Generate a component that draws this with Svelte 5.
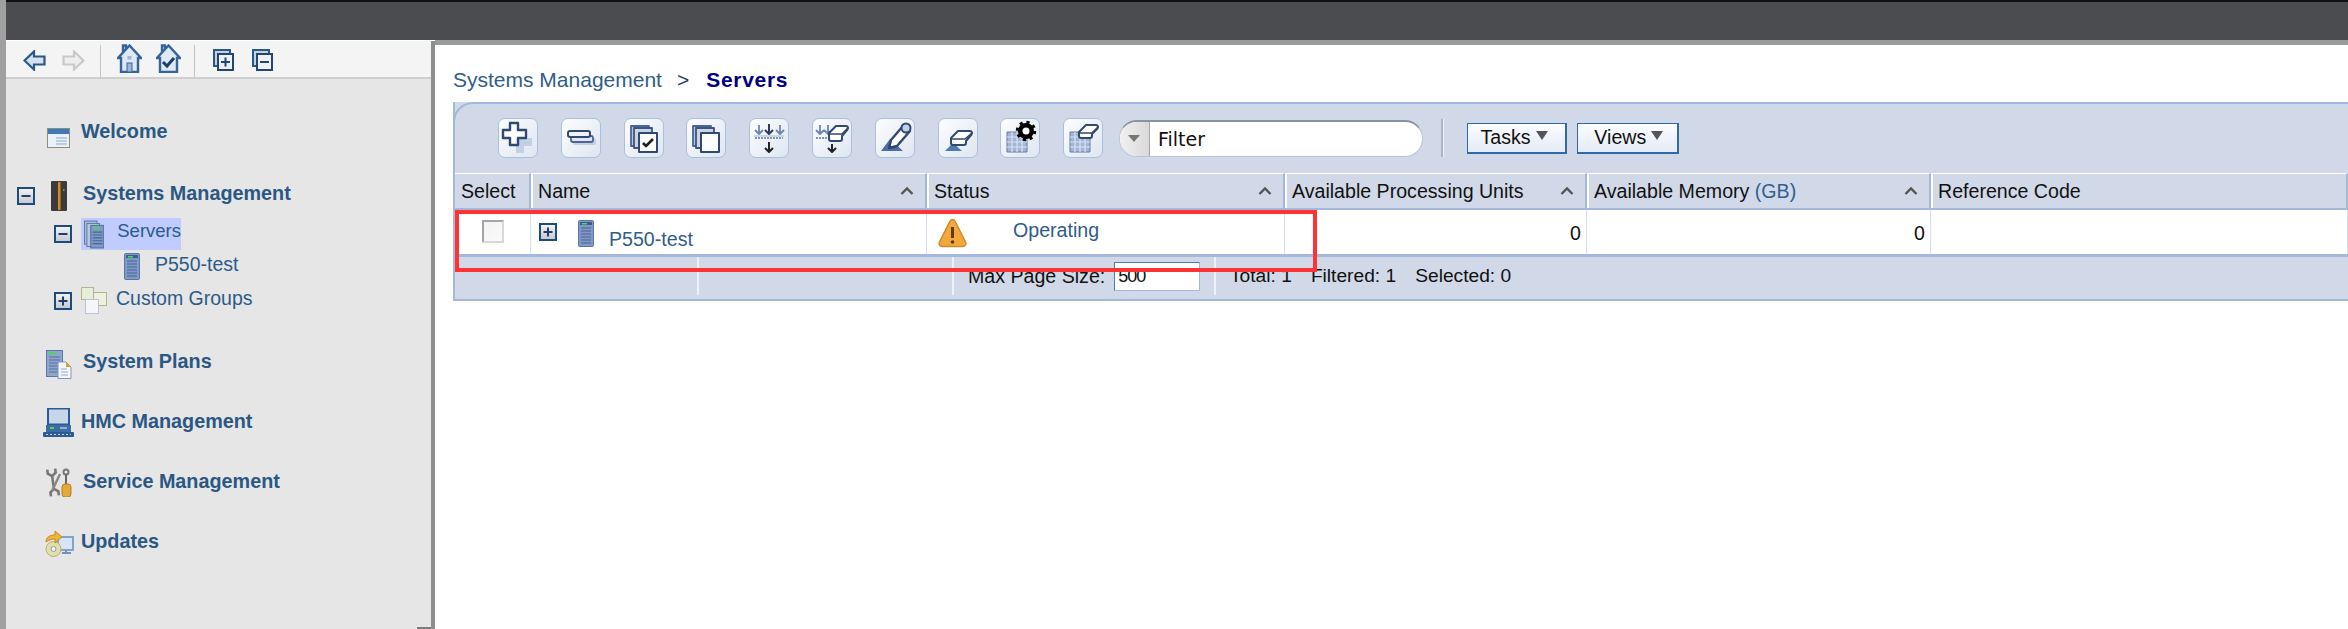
<script>
  const columns = [
    { label: "Select", width: 76 },
    { label: "Name", width: 396, sort: true },
    { label: "Status", width: 358, sort: true },
    { label: "Available Processing Units", width: 302, sort: true },
    { label: "Available Memory", unit: "(GB)", width: 344, sort: true },
    { label: "Reference Code", width: 417 }
  ];
</script>

{#snippet expander(open, size = 18)}
  <svg class="expander" width={size} height={size} viewBox="0 0 18 18">
    <defs>
      <linearGradient id="exp" x1="0" y1="0" x2="0" y2="1">
        <stop offset="0" stop-color="#f4f4f4" />
        <stop offset="1" stop-color="#c4c8d0" />
      </linearGradient>
    </defs>
    <rect x="1" y="1" width="16" height="16" fill="url(#exp)" stroke="#1f4a7c" stroke-width="2" />
    <path d="M4.5 9h9" stroke="#1f3f68" stroke-width="2" />
    {#if !open}<path d="M9 4.5v9" stroke="#1f3f68" stroke-width="2" />{/if}
  </svg>
{/snippet}

{#snippet serverIcon(w = 16, h = 27)}
  <svg class="server" width={w} height={h} viewBox="0 0 16 27">
    <rect x="0.5" y="0.5" width="15" height="26" rx="1" fill="#7f98c4" stroke="#5a76a6" />
    <rect x="2" y="2" width="12" height="3" fill="#3e5c8e" />
    <rect x="4" y="3" width="5" height="1.5" fill="#44dd55" />
    <path d="M3 8h10M3 11h10M3 14h10M3 17h10M3 20h10M3 23h10" stroke="#4a6696" stroke-width="1.2" />
  </svg>
{/snippet}

{#snippet plate(kind)}
  <svg width="40" height="40" viewBox="0 0 40 40" fill="none" stroke-linejoin="round">
    {#if kind === "add"}
      <path d="M15 9h8v7h8v8h-8v7h-8v-7H8v-8h7z" fill="#c3cfe3" transform="translate(3 4)" />
      <path d="M12 5h8v7h8v8h-8v7h-8v-7H5v-8h7z" fill="#fff" stroke="#31486f" stroke-width="2.4" />
    {:else if kind === "bars"}
      <rect x="12" y="20" width="23" height="7" rx="2" fill="#c3cfe3" />
      <rect x="10" y="18" width="22" height="6" rx="2" fill="#dfe6f2" stroke="#4d6590" stroke-width="1.8" />
      <rect x="7" y="13" width="22" height="6" rx="2" fill="#eef2f8" stroke="#31486f" stroke-width="2" />
    {:else if kind === "copycheck" || kind === "copy"}
      <rect x="7" y="8" width="18" height="20" fill="#b8c6dd" stroke="#4d6590" stroke-width="1.8" />
      <rect x="10" y="10" width="18" height="20" fill="#c9d4e6" stroke="#3d5580" stroke-width="1.8" />
      <rect x="15" y="15" width="18" height="19" fill="#fff" stroke="#31486f" stroke-width="2" />
      {#if kind === "copycheck"}
        <path d="M19 25l3 3 7-7" stroke="#222" stroke-width="2.6" />
      {/if}
    {:else if kind === "arrows"}
      <path d="M10 7v8M6 12l4 4 4-4M31 7v8M27 12l4 4 4-4" stroke="#6d86b0" stroke-width="1.8" />
      <path d="M20 6v10M16 12l4 4 4-4" stroke="#2c3e5c" stroke-width="2" />
      <path d="M6 20h28" stroke="#8094b8" stroke-width="2" stroke-dasharray="2 1" />
      <path d="M5 18h30" stroke="#a9b9d4" stroke-width="1" />
      <path d="M20 24v10M16 30l4 4 4-4" stroke="#222" stroke-width="2" />
    {:else if kind === "eraserarrows"}
      <path d="M8 7v8M4 12l4 4 4-4M16 7v8M12 12l4 4 4-4" stroke="#6d86b0" stroke-width="1.8" />
      <path d="M4 20h14" stroke="#8094b8" stroke-width="2" stroke-dasharray="2 1" />
      <path d="M17 15l7-7h10c2 0 2.500 2 1.500 3.500L30 18v3c0 1-1 2-2 2H19c-1 0-2-1-2-2z" fill="#fff" stroke="#31486f" stroke-width="2" />
      <path d="M17 16h13l6-6" stroke="#31486f" stroke-width="1.600" />
      <path d="M20 26v8M16 30l4 4 4-4" stroke="#222" stroke-width="2" />
    {:else if kind === "pencil"}
      <path d="M6 33l9-12 13 12z" fill="#4d6ea8" />
      <path d="M14 30l2-8 12-14 7 5-13 15z" fill="#fff" stroke="#31486f" stroke-width="2.400" />
      <circle cx="31" cy="10" r="4.500" fill="#c3cfe3" stroke="#31486f" stroke-width="2" />
      <path d="M14 30l3-1-2-2z" fill="#31486f" stroke="#31486f" />
    {:else if kind === "erasertri"}
      <path d="M7 33l8-8 9 8z" fill="#4d7ab2" />
      <path d="M13 20l7-7h12c2 0 2.500 2 1.500 3.500L28 23v2c0 1-1 2-2 2H15c-1 0-2-1-2-2z" fill="#fff" stroke="#31486f" stroke-width="2" />
      <path d="M13 21h14l7-6" stroke="#31486f" stroke-width="1.600" />
    {:else if kind === "gridgear" || kind === "griderase"}
      <rect x="7" y="14" width="20" height="20" fill="#a4b6d6" stroke="#5d7aab" />
      <path d="M7 19h20M7 24h20M7 29h20M12 14v20M17 14v20M22 14v20" stroke="#d9e1ef" stroke-width="1.2" />
      {#if kind === "gridgear"}
        <circle cx="26" cy="13" r="8" fill="#000" />
        <circle cx="26" cy="13" r="8.500" fill="none" stroke="#000" stroke-width="3.500" stroke-dasharray="3 3.700" />
        <circle cx="26" cy="13" r="3.500" fill="#fff" />
      {:else}
        <path d="M16 14l7-7h10c2 0 2.500 2 1.500 3.500L29 16v2c0 1-1 2-2 2H18c-1 0-2-1-2-2z" fill="#fff" stroke="#31486f" stroke-width="2" />
        <path d="M16 15h13l6-6" stroke="#31486f" stroke-width="1.600" />
      {/if}
    {/if}
  </svg>
{/snippet}

{#snippet caret()}
  <svg class="caret" width="14" height="9" viewBox="0 0 14 9" fill="none">
    <path d="M1.500 8L7 2.500 12.500 8" stroke="#555" stroke-width="2.400" />
  </svg>
{/snippet}

<div class="app">
  <header class="topbar"></header>

  <div class="body">
    <aside class="side">
      <div class="nav-tools">
        <svg class="arrow" width="23" height="21" viewBox="0 0 23 21">
          <path d="M1.500 10.500L11 1.500v5h10.500v8H11v5z" fill="#d5e1f1" stroke="#2c5688" stroke-width="2.200" />
        </svg>
        <svg class="arrow fwd" width="23" height="21" viewBox="0 0 23 21">
          <path d="M21.500 10.500L12 1.500v5H1.500v8H12v5z" fill="#eee" stroke="#c9c9c9" stroke-width="2.200" />
        </svg>
        <span class="sep first"></span>
        <svg class="home" width="25" height="29" viewBox="0 0 25 29">
          <path d="M6 8V1.500h3v3.500M12.500 1.500L1 14h3v14h17V14h3z" fill="#dfe9f6" stroke="#35639a" stroke-width="2.400" />
          <rect x="10" y="19" width="5" height="9" fill="#9db6d9" stroke="#35639a" />
          <rect x="10.500" y="12" width="4" height="3.500" fill="#9db6d9" />
        </svg>
        <svg class="home two" width="25" height="29" viewBox="0 0 25 29" fill="none">
          <path d="M6 8V1.500h3v3.500M12.500 1.500L1 14h3v14h17V14h3z" fill="#dfe9f6" stroke="#35639a" stroke-width="2.400" />
          <path d="M7 18l4 4 7-8" stroke="#1f3f68" stroke-width="3" />
        </svg>
        <span class="sep second"></span>
        <svg class="stack" width="21" height="22" viewBox="0 0 21 22">
          <rect x="1" y="1" width="16" height="16" fill="#c5d2e4" stroke="#2c5688" stroke-width="2" />
          <rect x="5" y="5" width="15" height="16" fill="#edf1f6" stroke="#24456f" stroke-width="2" />
          <path d="M8 13h9M12.500 8.500v9" stroke="#24456f" stroke-width="2" />
        </svg>
        <svg class="stack two" width="21" height="22" viewBox="0 0 21 22">
          <rect x="1" y="1" width="16" height="16" fill="#c5d2e4" stroke="#2c5688" stroke-width="2" />
          <rect x="5" y="5" width="15" height="16" fill="#edf1f6" stroke="#24456f" stroke-width="2" />
          <path d="M8 13h9" stroke="#24456f" stroke-width="2" />
        </svg>
      </div>

      <nav class="tree">
        <div class="item welcome">
          <svg class="ico" width="23" height="20" viewBox="0 0 23 20">
            <rect x="0.500" y="0.500" width="22" height="19" fill="#eaf1fa" stroke="#8b8f78" />
            <rect x="1" y="1" width="21" height="5" fill="#3f78b8" />
            <path d="M9 10h11M9 13h11M9 16h11" stroke="#a8c2e2" stroke-width="1.400" />
          </svg>
          <span class="label">Welcome</span>
        </div>

        <div class="item sysmgmt">
          {@render expander(true)}
          <svg class="ico" width="16" height="30" viewBox="0 0 16 30">
            <rect width="16" height="30" rx="1" fill="#3b3b3b" />
            <rect x="7" y="1" width="2.500" height="28" fill="#d98a1e" />
            <rect x="12" y="8" width="1.500" height="2" fill="#44aa55" />
          </svg>
          <span class="label">Systems Management</span>
        </div>

        <div class="item servers">
          {@render expander(true)}
          <div class="selected">
            <svg width="21" height="29" viewBox="0 0 21 29">
              <rect x="0.500" y="0.500" width="13" height="24" fill="#a9bcdc" stroke="#5a76a6" />
              <rect x="3" y="3" width="13" height="24" fill="#b8c8e2" stroke="#5a76a6" />
              <rect x="7" y="5" width="13.500" height="23.500" fill="#7f98c4" stroke="#4f6c9e" />
              <rect x="9" y="6.500" width="7" height="2" fill="#44dd55" />
              <path d="M9 12h10M9 15h10M9 18h10M9 21h10M9 24h10" stroke="#4a6696" stroke-width="1.200" />
            </svg>
            <span>Servers</span>
          </div>
        </div>

        <div class="item p550">
          {@render serverIcon()}
          <span>P550-test</span>
        </div>

        <div class="item groups">
          {@render expander(false)}
          <svg class="ico" width="26" height="27" viewBox="0 0 26 27">
            <rect x="0.500" y="0.500" width="12" height="12" fill="#e8efd8" stroke="#b2b58c" />
            <rect x="12.500" y="5.500" width="13" height="13" fill="#eef0e2" stroke="#b2b58c" />
            <rect x="4.500" y="12.500" width="13" height="14" fill="#f4f6fa" stroke="#b9c4d6" />
          </svg>
          <span>Custom Groups</span>
        </div>

        <div class="item plans">
          <svg class="ico" width="26" height="29" viewBox="0 0 26 29">
            <rect x="0.500" y="0.500" width="16" height="26" fill="#8fa6cc" stroke="#5a76a6" />
            <rect x="3" y="2" width="6" height="2" fill="#44dd55" />
            <path d="M3 7h11M3 10h11M3 13h11M3 16h11M3 19h11M3 22h11" stroke="#52709f" />
            <path d="M12 12h8l5 5v11.500H12z" fill="#f3f6fb" stroke="#7f96bb" />
            <path d="M20 12l5 5h-5z" fill="#e0a02e" />
            <path d="M15 19h6M15 22h7M15 25h7" stroke="#8fa6cc" />
          </svg>
          <span class="label">System Plans</span>
        </div>

        <div class="item hmc">
          <svg class="ico" width="31" height="29" viewBox="0 0 31 29">
            <rect x="5" y="0.500" width="21" height="16" fill="#c7d6ea" stroke="#2e5a92" stroke-width="2" />
            <rect x="3" y="17" width="25" height="7" fill="#3f6ba5" />
            <rect x="7" y="19" width="4" height="2" fill="#44dd55" />
            <rect x="17" y="19" width="7" height="2" fill="#8fb0d8" />
            <rect x="0" y="24" width="31" height="5" rx="1" fill="#2e5a92" />
            <path d="M3 26.500h25" stroke="#c7d6ea" stroke-dasharray="2 2" />
          </svg>
          <span class="label">HMC Management</span>
        </div>

        <div class="item service">
          <svg class="ico" width="26" height="29" viewBox="0 0 26 29" fill="none">
            <path d="M3 1v4l4 3 4-3V1M7 8v13M3 28v-4l4-3 4 3v4" stroke="#777" stroke-width="2.600" transform="rotate(-8 7 14)" />
            <path d="M14 6l-8 17" stroke="#888" stroke-width="2.400" />
            <circle cx="20" cy="4" r="2.500" stroke="#777" stroke-width="2" />
            <path d="M20 6v11" stroke="#666" stroke-width="2" />
            <rect x="16" y="16" width="9" height="13" rx="3" fill="#e3a93a" stroke="#b57f1c" />
          </svg>
          <span class="label">Service Management</span>
        </div>

        <div class="item updates">
          <svg class="ico" width="29" height="27" viewBox="0 0 29 27">
            <rect x="13" y="7" width="15" height="13" fill="#d7e6f6" stroke="#6e93bd" stroke-width="1.600" />
            <path d="M17 23h9M21 20v3" stroke="#6e93bd" stroke-width="2" />
            <circle cx="8.500" cy="19" r="7.500" fill="#e3dfa8" stroke="#b5b07a" />
            <circle cx="8.500" cy="19" r="2.500" fill="#f4f4f4" stroke="#8f9aaf" />
            <path d="M1 12c0-5 4-7 9-7V1l7 6-7 6V9c-4 0-6 1-9 3z" fill="#ecb53e" stroke="#c68a18" />
          </svg>
          <span class="label">Updates</span>
        </div>
      </nav>
      <span class="grip"></span>
    </aside>

    <main class="main">
      <div class="crumbs">
        <span class="crumb">Systems Management</span>
        <span class="gt">&gt;</span>
        <span class="here">Servers</span>
      </div>

      <section class="panel">
        <div class="tools">
          {#each ["add", "bars", "copycheck", "copy", "arrows", "eraserarrows", "pencil", "erasertri", "gridgear", "griderase"] as kind}
            <button class="tool">{@render plate(kind)}</button>
          {/each}
          <div class="filter">
            <span class="drop"><i></i></span>
            <span class="filter-text">Filter</span>
          </div>
          <span class="tool-sep"></span>
          <button class="menu tasks">Tasks<i></i></button>
          <button class="menu views">Views<i></i></button>
        </div>

        <div class="thead">
          {#each columns as col}
            <div class="th" style="width: {col.width}px">
              <span>{col.label}{#if col.unit}&nbsp;<em>{col.unit}</em>{/if}</span>
              {#if col.sort}{@render caret()}{/if}
            </div>
          {/each}
        </div>

        <div class="tr">
          <div class="td check" style="width: {columns[0].width}px"><span class="box"></span></div>
          <div class="td name" style="width: {columns[1].width}px">
            {@render expander(false)}
            {@render serverIcon()}
            <span class="link">P550-test</span>
          </div>
          <div class="td status" style="width: {columns[2].width}px">
            <svg width="29" height="30" viewBox="0 0 29 30">
              <path d="M14.500 1.500c1.500 0 2.300 1 3 2.500l10 20c1 2.500-.3 4.500-3 4.500h-20c-2.700 0-4-2-3-4.500l10-20c.7-1.500 1.500-2.500 3-2.500z" fill="#f3a83e" stroke="#cf8a2a" stroke-width="1.500" />
              <path d="M14.500 9v11" stroke="#5a3b12" stroke-width="3" />
              <circle cx="14.500" cy="24" r="1.800" fill="#5a3b12" />
            </svg>
            <span class="link">Operating</span>
          </div>
          <div class="td num" style="width: {columns[3].width}px">0</div>
          <div class="td num" style="width: {columns[4].width}px">0</div>
          <div class="td" style="width: {columns[5].width}px"></div>
        </div>

        <div class="foot">
          <div class="fcell a"></div>
          <div class="fcell b"></div>
          <div class="fcell c">Max Page Size:<span class="size">500</span></div>
          <div class="fcell d">
            <span>Total: 1</span><span>Filtered: 1</span><span>Selected: 0</span>
          </div>
        </div>

        <div class="callout"></div>
      </section>
    </main>
  </div>
</div>

<style>
  :global(body) {
    margin: 0;
    background: #fff;
  }

  .app {
    width: 2348px;
    height: 629px;
    overflow: hidden;
    box-sizing: border-box;
    border-left: 6px solid #a0a0a0;
    display: flex;
    flex-direction: column;
    font-family: "Liberation Sans", Arial, sans-serif;
    font-size: 19.600px;
    color: #111;
  }

  .topbar {
    height: 40px;
    flex: none;
    box-sizing: border-box;
    border-top: 2px solid #111;
    background: #4b4c50;
  }

  .body {
    flex: 1;
    display: flex;
    min-height: 0;
  }

  /* left navigation */
  .side {
    width: 429px;
    flex: none;
    box-sizing: border-box;
    margin-top: 1px;
    background: #e6e6e6;
    border-right: 4px solid #8d8d8d;
    position: relative;
  }

  .nav-tools {
    height: 38px;
    box-sizing: border-box;
    background: #f4f4f4;
    border-bottom: 2px solid #cfcfcf;
    position: relative;
  }

  .nav-tools svg,
  .nav-tools .sep {
    position: absolute;
  }

  .arrow { left: 17px; top: 9px; }
  .arrow.fwd { left: 56px; }
  .sep { width: 1px; height: 32px; top: 4px; background: #c4c4c4; }
  .sep.first { left: 94px; }
  .sep.second { left: 188px; }
  .home { left: 111px; top: 3px; }
  .home.two { left: 150px; }
  .stack { left: 207px; top: 8px; }
  .stack.two { left: 246px; }

  .grip {
    position: absolute;
    right: 0;
    bottom: 0;
    width: 14px;
    height: 2px;
    background: #7c7c7c;
  }

  .tree {
    color: #2c5a8a;
    font-size: 19.500px;
  }

  .item {
    display: flex;
    align-items: center;
    position: absolute;
    white-space: nowrap;
  }

  .label {
    font-weight: 700;
    font-size: 19.800px;
    color: #2a5783;
  }

  .welcome { left: 41px; top: 87px; gap: 11px; }
  .welcome .label { margin-top: -14px; }
  .sysmgmt { left: 11px; top: 140px; }
  .sysmgmt .ico { margin-left: 16px; margin-right: 16px; }
  .sysmgmt .label { margin-top: -6px; }
  .servers { left: 48px; top: 177px; }
  .selected {
    display: flex;
    align-items: center;
    gap: 13px;
    width: 100px;
    height: 32px;
    margin-left: 9px;
    padding-left: 3px;
    box-sizing: border-box;
    background: #c0ccff;
    font-size: 18.500px;
  }
  .selected span { margin-top: -6px; }
  .p550 { left: 118px; top: 212px; gap: 15px; }
  .p550 span { margin-top: -4px; }
  .groups { left: 48px; top: 246px; gap: 9px; }
  .groups span { margin-top: -5px; }
  .plans { left: 40px; top: 309px; gap: 11px; }
  .plans .label { margin-top: -7px; }
  .hmc { left: 37px; top: 367px; gap: 7px; }
  .hmc .label { margin-top: -3px; }
  .service { left: 40px; top: 427px; gap: 11px; }
  .service .label { margin-top: -3px; }
  .updates { left: 39px; top: 489px; gap: 7px; }
  .updates .label { margin-top: -4px; }

  /* main area */
  .main {
    flex: 1;
    min-width: 0;
    padding-left: 18px;
    box-sizing: border-box;
    border-top: 5px solid #9a9a9a;
  }

  .crumbs {
    height: 26px;
    margin: 22px 0 9px;
    display: flex;
    align-items: center;
    font-size: 21px;
    color: #2f5d8a;
  }

  .gt {
    margin-left: 15px;
    color: #1c3f74;
  }

  .here {
    margin-left: 17px;
    font-weight: 700;
    letter-spacing: 0.700px;
    color: #000080;
  }

  .panel {
    position: relative;
    width: 1895px;
    height: 199px;
    box-sizing: border-box;
    background: #d1d9e8;
    border-left: 2px solid #a3b8dc;
    border-bottom: 2px solid #a3b8dc;
    display: flex;
    flex-direction: column;
  }

  .tools {
    height: 71px;
    flex: none;
    box-sizing: border-box;
    margin-left: -2px;
    padding: 0 0 1px 43px;
    border-top: 2px solid #a3b8dc;
    border-left: 2px solid #a3b8dc;
    border-top-left-radius: 20px;
    display: flex;
    align-items: center;
    gap: 22.800px;
  }

  .tool {
    width: 40px;
    height: 40px;
    padding: 0;
    box-sizing: border-box;
    border: 1.500px solid #a9c0de;
    border-radius: 7px;
    background: linear-gradient(135deg, #fcfdfe, #dfe6f1);
    display: flex;
    align-items: center;
    justify-content: center;
  }

  .tool svg {
    display: block;
    flex: none;
  }

  .filter {
    width: 304px;
    height: 37px;
    margin-left: -7px;
    box-sizing: border-box;
    display: flex;
    align-items: center;
    background: #fff;
    border-radius: 18px;
    border: 1px solid #bcc4d2;
    border-top: 2px solid #8b93a3;
    overflow: hidden;
  }

  .drop {
    width: 30px;
    height: 100%;
    flex: none;
    display: flex;
    align-items: center;
    justify-content: center;
    box-sizing: border-box;
    background: linear-gradient(90deg, #f1f1f1, #d9d9d9);
    border-right: 1px solid #a5a5a5;
  }

  .drop i {
    border: 6px solid transparent;
    border-top: 7px solid #777;
    border-bottom: 0;
  }

  .filter-text {
    margin-left: 8px;
    font-family: "DejaVu Sans", sans-serif;
    font-size: 19px;
    color: #111;
  }

  .tool-sep {
    width: 2px;
    height: 38px;
    margin-left: -5px;
    background: #aab4c6;
    border-right: 1px solid #eef1f6;
  }

  .menu {
    height: 31px;
    padding: 0 0 0 13px;
    box-sizing: border-box;
    background: linear-gradient(#fafcff, #e5ebf5);
    border: 1px solid #2f6aa6;
    border-bottom-width: 2px;
    border-right-width: 2px;
    font: inherit;
    color: #111;
    display: flex;
    align-items: center;
  }

  .menu i {
    margin-left: 5px;
    margin-top: -4px;
    border: 6px solid transparent;
    border-top: 9px solid #555;
    border-bottom: 0;
  }

  .tasks { width: 100px; margin-left: 0; }
  .views { width: 102px; margin-left: -12px; padding-left: 16px; }

  .thead {
    height: 37px;
    flex: none;
    display: flex;
    box-sizing: border-box;
    border-bottom: 2px solid #a3b8dc;
  }

  .th {
    flex: none;
    box-sizing: border-box;
    border-top: 1px solid #fff;
    border-left: 2px solid #fff;
    border-right: 2px solid #a3b8dc;
    padding: 1px 5px 0 5px;
    display: flex;
    align-items: center;
    justify-content: space-between;
    white-space: nowrap;
  }

  .th:first-child { border-left: 0; padding-left: 6px; }
  .th em { font-style: normal; color: #2f6090; }

  .caret {
    flex: none;
    margin: -3px 6px 0 0;
  }

  .tr {
    height: 44px;
    flex: none;
    display: flex;
    background: #fff;
  }

  .td {
    flex: none;
    box-sizing: border-box;
    border-right: 1px solid #d6dfee;
    display: flex;
    align-items: center;
  }

  .td.check { padding: 0 0 0 27px; }

  .box {
    width: 22px;
    height: 23px;
    box-sizing: border-box;
    margin-top: -2px;
    border: 2px solid #a5a5a5;
    border-right-color: #d8d8d8;
    border-bottom-color: #d8d8d8;
    background: linear-gradient(135deg, #f3f3f3, #fafafa);
    border-radius: 1px;
  }

  .td.name { padding-left: 8px; }
  .td.name :global(.expander) { margin: -1px 21px 0 0; }
  .td.name :global(.server) { margin-top: 3px; }

  .link { color: #2f5d8a; }
  .td.name .link { margin: 14px 0 0 15px; }

  .td.status { padding-left: 11px; }
  .td.status svg { margin-top: 1px; }
  .td.status .link { margin: -4px 0 0 46px; }

  .td.num {
    justify-content: flex-end;
    padding-right: 5px;
    padding-top: 2px;
  }

  .foot {
    flex: 1;
    display: flex;
    box-sizing: border-box;
    border-top: 3px solid #a3b8dc;
    white-space: nowrap;
  }

  .fcell {
    flex: none;
    box-sizing: border-box;
    display: flex;
    align-items: center;
    margin: 0 0 4px;
  }

  .fcell.a { width: 242px; }
  .fcell.b { width: 255px; border-left: 2px solid #eef2f8; }
  .fcell.c {
    width: 262px;
    padding-left: 14px;
    border-left: 2px solid #eef2f8;
  }
  .fcell.d {
    padding-left: 14px;
    gap: 19px;
    font-size: 19.200px;
    border-left: 2px solid #eef2f8;
  }

  .size {
    width: 86px;
    height: 29px;
    box-sizing: border-box;
    margin-left: 9px;
    padding-left: 3px;
    background: #fff;
    border: 1px solid #4a7fb5;
    border-bottom-color: #a3b8dc;
    border-right-color: #a3b8dc;
    line-height: 27px;
    font-size: 18px;
    letter-spacing: -1px;
  }

  .callout {
    position: absolute;
    left: 0;
    top: 108px;
    width: 862px;
    height: 62px;
    box-sizing: border-box;
    border: 4px solid #ff3333;
    pointer-events: none;
  }
</style>
